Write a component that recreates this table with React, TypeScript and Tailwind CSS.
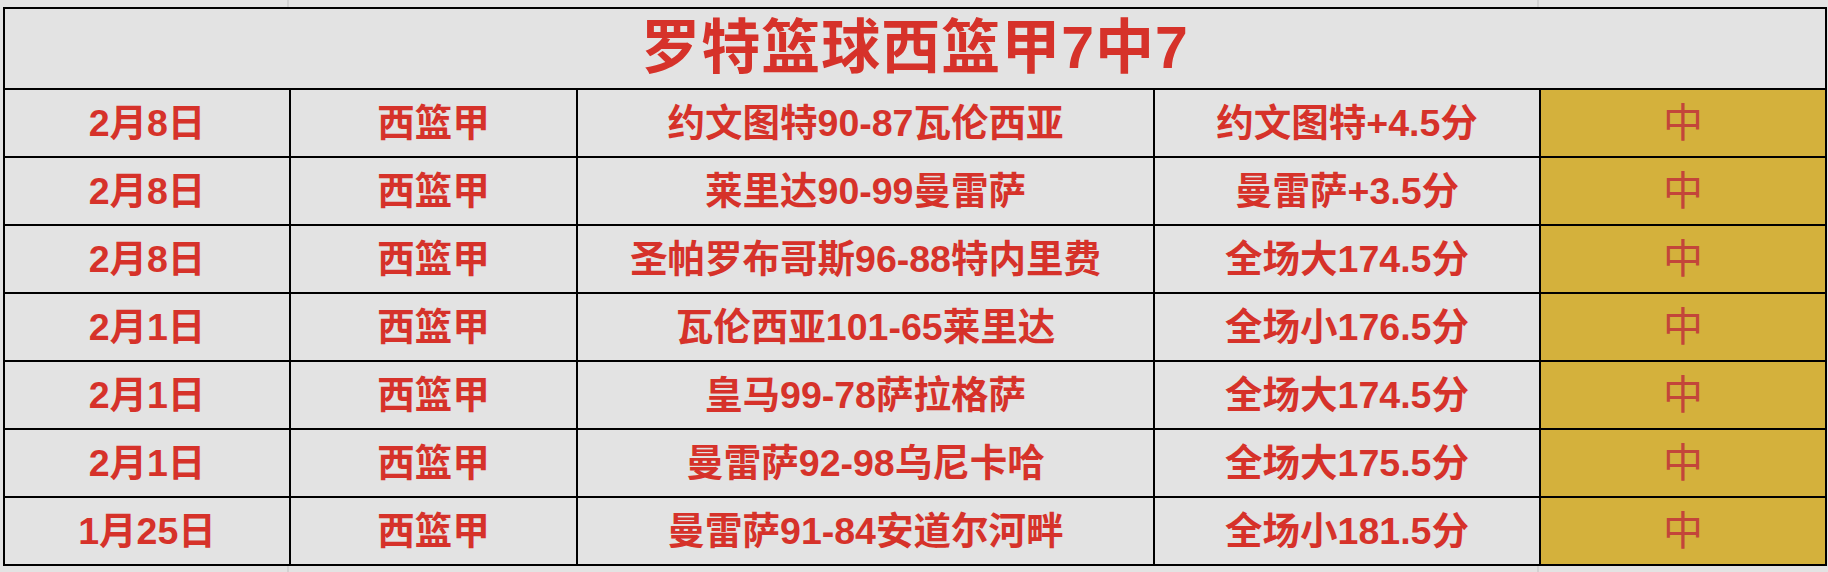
// Result sheet — spreadsheet-style table of match picks with hit markers.

import React from 'react';

type Row = { date: string; league: string; match: string; pick: string; result: string };

const rows: Row[] = [
  { date: '2月8日', league: '西篮甲', match: '约文图特90-87瓦伦西亚', pick: '约文图特+4.5分', result: '中' },
  { date: '2月8日', league: '西篮甲', match: '莱里达90-99曼雷萨', pick: '曼雷萨+3.5分', result: '中' },
  { date: '2月8日', league: '西篮甲', match: '圣帕罗布哥斯96-88特内里费', pick: '全场大174.5分', result: '中' },
  { date: '2月1日', league: '西篮甲', match: '瓦伦西亚101-65莱里达', pick: '全场小176.5分', result: '中' },
  { date: '2月1日', league: '西篮甲', match: '皇马99-78萨拉格萨', pick: '全场大174.5分', result: '中' },
  { date: '2月1日', league: '西篮甲', match: '曼雷萨92-98乌尼卡哈', pick: '全场大175.5分', result: '中' },
  { date: '1月25日', league: '西篮甲', match: '曼雷萨91-84安道尔河畔', pick: '全场小181.5分', result: '中' },
];

// digits in a Helvetica-like face, Han glyphs from Noto CJK
const font = { fontFamily: '"Liberation Sans", "Noto Sans CJK SC", sans-serif' };

// faint spreadsheet gridlines peeking above / below the table
const Strip: React.FC<{ h: string }> = ({ h }) => (
  <div className={`flex ${h}`}>
    <div className="w-[289px] border-r-2 border-[#d2d2d2]" />
    <div className="w-[1250px] border-r-2 border-[#d2d2d2]" />
  </div>
);

const cell = 'border-r-2 border-b-2 border-black flex items-center justify-center text-[37.5px] font-bold text-[#d6322a]';

export default function App() {
  return (
    <div className="w-[1828px] h-[572px] bg-[#e3e3e3] overflow-hidden" style={font}>
      <Strip h="h-[7px]" />
      <div className="ml-[3px] w-[1824px] border-t-2 border-l-2 border-black">
        <div className="h-[81px] border-r-2 border-b-2 border-black flex items-center justify-center">
          <span className="text-[59px] font-bold text-[#d6322a] leading-none tracking-[1px]">罗特篮球西篮甲7中7</span>
        </div>
        {rows.map((r, i) => (
          <div key={i} className="grid grid-cols-[286px_287px_577px_386px_286px] h-[68px]">
            <div className={cell}>{r.date}</div>
            <div className={cell}>{r.league}</div>
            <div className={cell}>{r.match}</div>
            <div className={cell}>{r.pick}</div>
            <div className="border-r-2 border-b-2 border-black bg-[#d4b13c] flex items-center justify-center text-[40px] text-[#c3453a]">{r.result}</div>
          </div>
        ))}
      </div>
      <Strip h="h-[8px]" />
    </div>
  );
}
